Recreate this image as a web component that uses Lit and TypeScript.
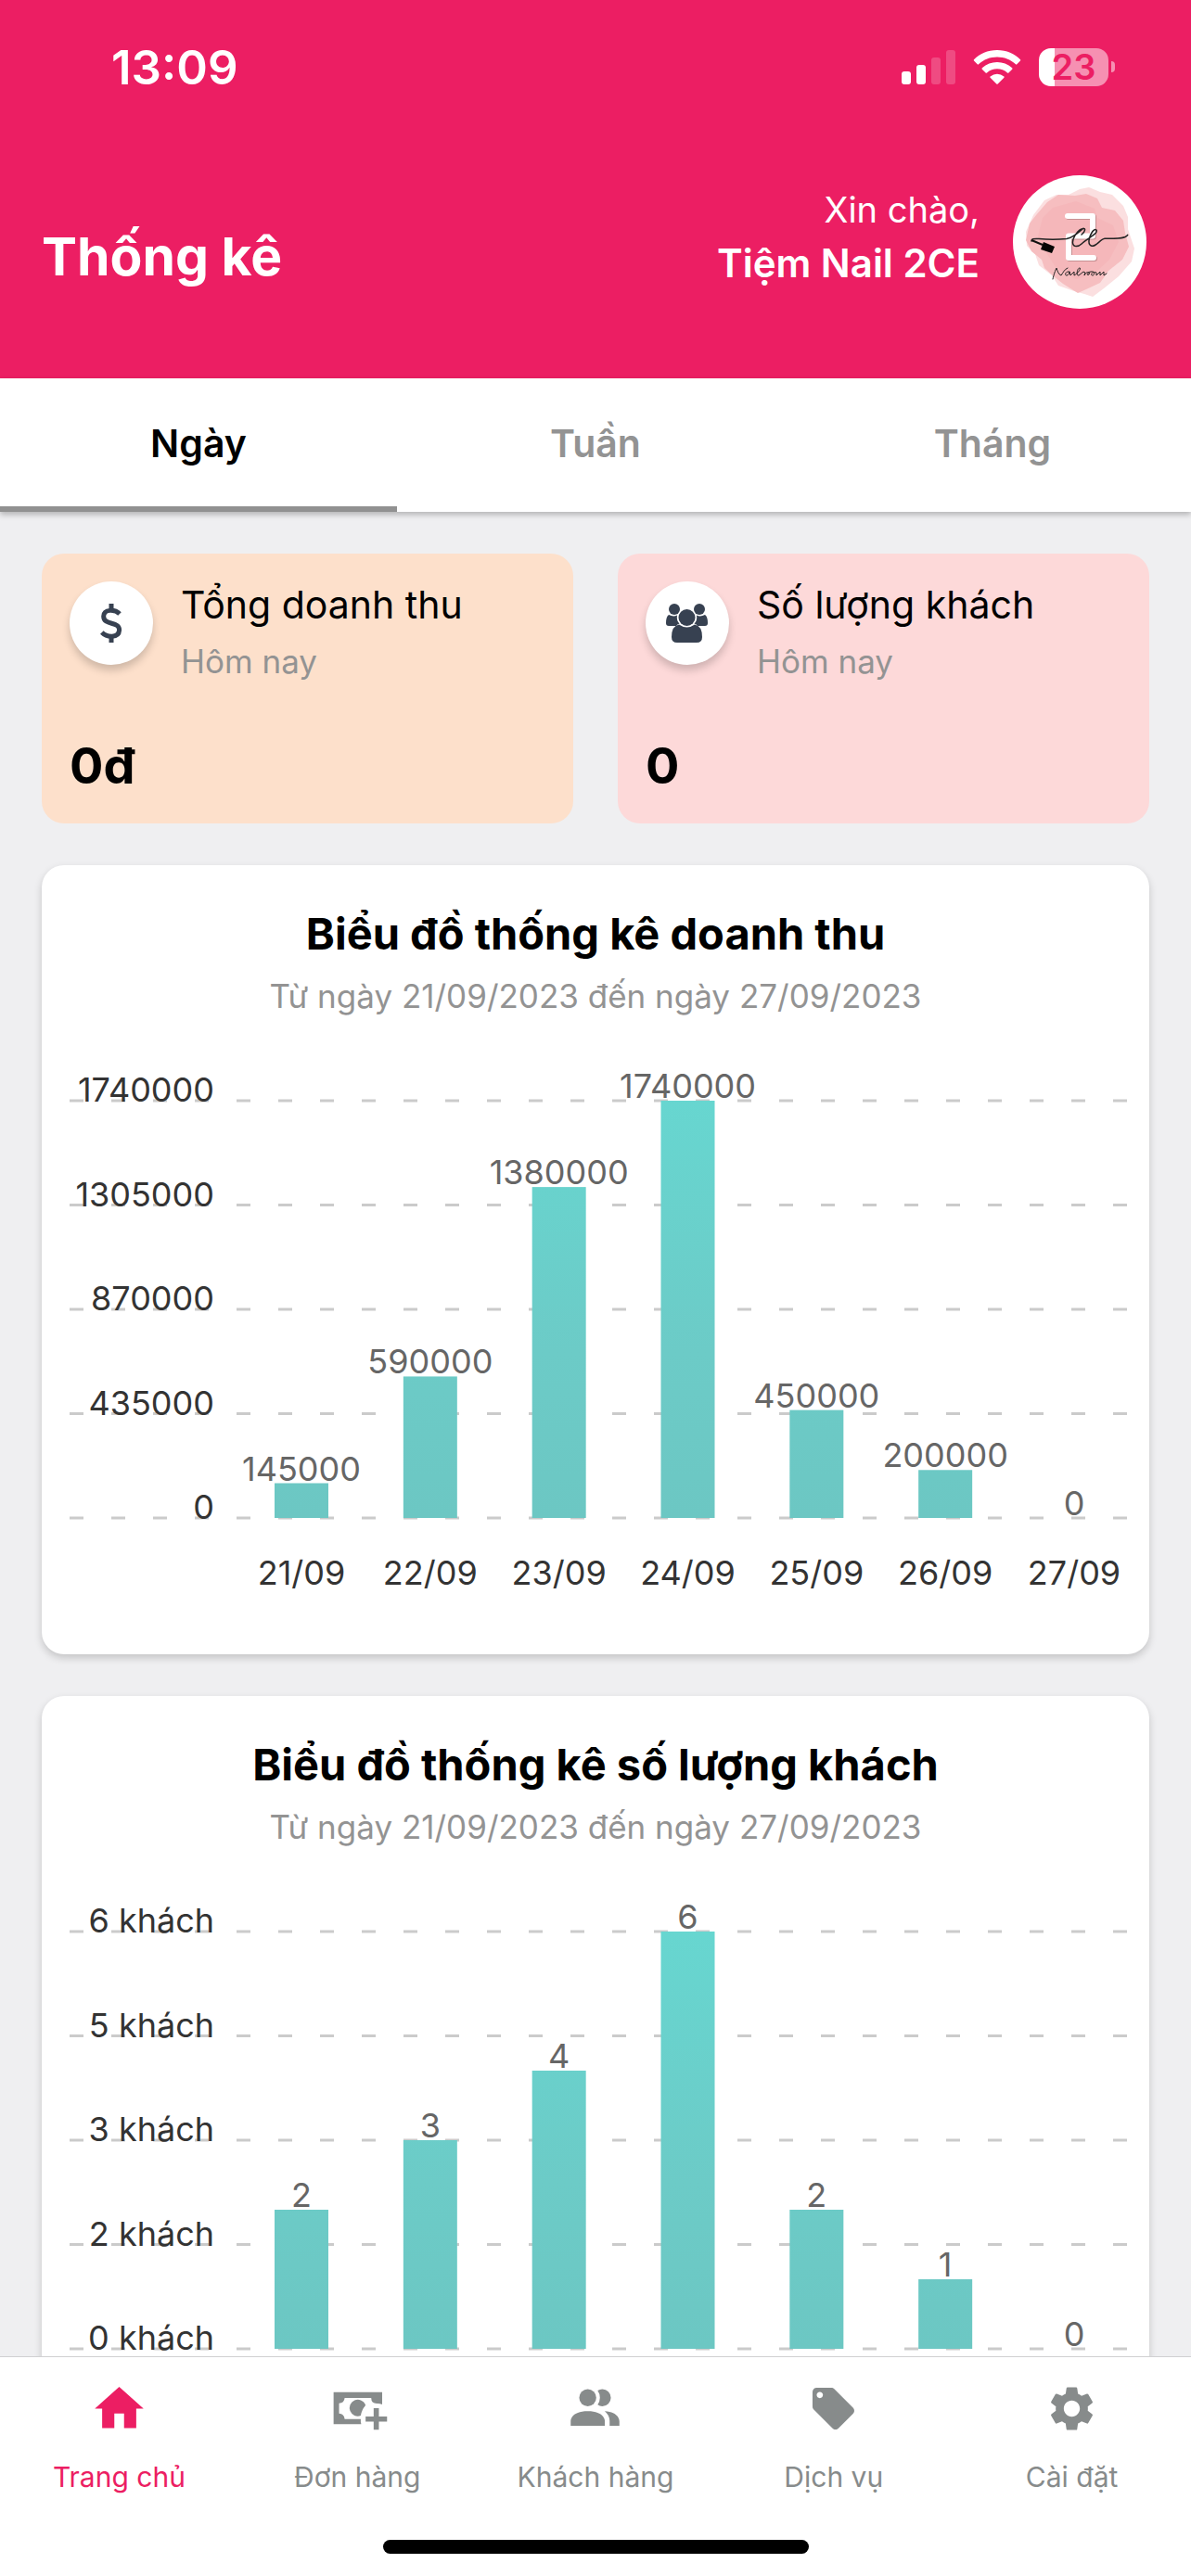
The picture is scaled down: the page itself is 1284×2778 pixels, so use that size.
import {LitElement, css, html, svg} from 'lit';
import {customElement, property, state} from 'lit/decorators.js';
import {classMap} from 'lit/directives/class-map.js';

interface ChartEntry {
  label: string;
  value: number;
}

const DAYS = ['21/09', '22/09', '23/09', '24/09', '25/09', '26/09', '27/09'];
const REVENUE = [145000, 590000, 1380000, 1740000, 450000, 200000, 0];
const CUSTOMERS = [2, 3, 4, 6, 2, 1, 0];

const toEntries = (values: number[]): ChartEntry[] =>
  values.map((value, i) => ({label: DAYS[i], value}));

@customElement('bar-chart')
export class BarChart extends LitElement {
  static styles = css`
    :host {
      display: block;
    }

    svg {
      display: block;
      width: 100%;
      font-family: Inter, 'Noto Sans', sans-serif;
      font-size: 36px;
    }

    .line {
      stroke: #cbcbcb;
      stroke-width: 3;
      stroke-dasharray: 15 30;
    }

    .tick {
      fill: #333;
      text-anchor: end;
    }

    .day {
      fill: #333;
      text-anchor: middle;
    }

    .value {
      fill: #666;
      text-anchor: middle;
    }
  `;

  @property({attribute: false})
  entries: ChartEntry[] = [];

  @property()
  unit: string = '';

  render() {
    const top = 89;
    const height = 450;
    const bottom = top + height;
    const max = Math.max(...this.entries.map((entry) => entry.value), 1);
    const ticks = [4, 3, 2, 1, 0];

    return html`
      <svg viewBox="0 0 1194 686" role="img" aria-label="Biểu đồ">
        <defs>
          <linearGradient id="bar" gradientUnits="userSpaceOnUse" x1="0" y1=${top} x2="0" y2=${bottom}>
            <stop offset="0" stop-color="#67d6d0"></stop>
            <stop offset="0.6" stop-color="#6ccbc7"></stop>
            <stop offset="1" stop-color="#6cc7c3"></stop>
          </linearGradient>
        </defs>
        ${ticks.map((tick) => {
          const y = bottom - (height * tick) / 4;
          return svg`
            <line class="line" x1="30" x2="1170" y1=${y} y2=${y}></line>
            <text class="tick" x="186" y=${y + 1}>${Math.round((max * tick) / 4)}${this.unit}</text>
          `;
        })}
        ${this.entries.map((entry, i) => {
          const x = 280 + (i * 833) / 6;
          const h = (height * entry.value) / max;
          return svg`
            <rect x=${x - 29} y=${bottom - h} width="58" height=${h} fill="url(#bar)"></rect>
            <text class="value" x=${x} y=${bottom - h - 3}>${entry.value}</text>
            <text class="day" x=${x} y=${bottom + 72}>${entry.label}</text>
          `;
        })}
      </svg>
    `;
  }
}

@customElement('stat-card')
export class StatCard extends LitElement {
  static styles = css`
    :host {
      display: flex;
      flex-direction: column;
      justify-content: space-between;
      box-sizing: border-box;
      min-height: 291px;
      padding: 30px;
      border-radius: 24px;
    }

    .top {
      display: flex;
      gap: 30px;
    }

    .icon {
      display: grid;
      place-items: center;
      flex: none;
      width: 90px;
      height: 90px;
      border-radius: 50%;
      background: #fff;
      box-shadow: 0 6px 9px rgb(0 0 0 / 18%);
    }

    .title,
    .period {
      margin: 0;
      font-weight: 400;
    }

    .title {
      font-size: 41px;
      line-height: 50px;
    }

    .period {
      padding-top: 12px;
      font-size: 35px;
      line-height: 48px;
      color: #939393;
    }

    .value {
      margin: 0;
      font-size: 54px;
      font-weight: 700;
      line-height: 64px;
    }
  `;

  @property()
  heading: string = '';

  @property()
  period: string = '';

  @property()
  value: string = '';

  render() {
    return html`
      <div class="top">
        <div class="icon"><slot></slot></div>
        <div>
          <h2 class="title">${this.heading}</h2>
          <p class="period">${this.period}</p>
        </div>
      </div>
      <p class="value">${this.value}</p>
    `;
  }
}

const signalIcon = svg`
  <svg width="58" height="37" viewBox="0 0 58 37" fill="#fff">
    <rect x="0" y="23" width="10" height="14" rx="3"></rect>
    <rect x="16" y="16" width="10" height="21" rx="3"></rect>
    <rect x="32" y="8" width="10" height="29" rx="3" opacity="0.2"></rect>
    <rect x="48" y="0" width="10" height="37" rx="3" opacity="0.2"></rect>
  </svg>
`;

const wifiIcon = svg`
  <svg width="52" height="37" viewBox="0 0 52 37" fill="#fff">
    <path d="M26 0C36 0 45 4 51 10.300Q51.600 11 51 11.600L47.300 15.300Q46.600 16 46 15.300C40.500 10.200 33.500 7.500 26 7.500S11.500 10.200 6 15.300Q5.400 16 4.700 15.300L1 11.600Q.4 11 1 10.300C7 4 16 0 26 0Z"></path>
    <path d="M26 13Q35 13 42.200 19.300Q42.900 20 42.200 20.700L38.400 24.500Q37.700 25.200 37 24.500Q32.200 20.300 26 20.300T15 24.500Q14.300 25.200 13.600 24.500L9.800 20.700Q9.100 20 9.800 19.300Q17 13 26 13Z"></path>
    <path d="M26 25.800Q30 25.800 33.400 28.400Q34 29 33.400 29.700L26.700 36.500Q26 37.200 25.300 36.500L18.600 29.700Q18 29 18.600 28.400Q22 25.800 26 25.800Z"></path>
  </svg>
`;

// Watercolour disc with the salon's monogram and nail brush.
const salonLogo = svg`
  <svg viewBox="0 0 144 144" role="img" aria-label="2CE Nailroom">
    <circle cx="72" cy="72" r="72" fill="#fff"></circle>
    <path d="M34 27L47 21L60 21L72 15L82 13L94 18L107 21L119 33L124 45L124 58L131 79L128 93L114 109L98 122L86 131L77 128L66 125L49 119L42 108L28 97L24 85L15 76L14 61L22 43Z" fill="#fbdfe0"></path>
    <path d="M37 29L49 21L67 22L79 20L91 25L96 35L110 38L119 49L121 62L125 77L118 91L103 103L94 116L79 123L70 127L54 117L44 109L34 100L31 91L20 82L14 70L18 52L25 43Z" fill="#f6bec0"></path>
    <path d="M43 35L68 28L88 36L91 46L108 54L114 72L104 91L88 106L68 112L46 99L35 82L27 66L32 46Z" fill="#f5b2b5" opacity="0.6"></path>
    <path d="M60 45H87V66.500H61V90H88" fill="none" stroke="#a87678" stroke-width="6" stroke-linecap="round" stroke-linejoin="round" opacity="0.600"></path>
    <path d="M59 44H86V65.500H60V89H87" fill="none" stroke="#fff" stroke-width="6" stroke-linecap="round" stroke-linejoin="round"></path>
    <path d="M20 71C20 68 23 68.500 28 68.500C38 69.500 48 69.500 58 68.500C66 67 71 61 75 57.800C79 56 78 61 74 64M76 57.500C70 58 64 68 64.500 73C65 78 71 77 74 74C78 70 86 66 89.500 62C92 58 88 57 85 62C82 67 80 75 85 76.300C90 77 94 69 99 68.300C107 67.500 120 70 123.700 64.300" fill="none" stroke="#222" stroke-width="1.500" stroke-linecap="round"></path>
    <path d="M20 70L32 75" stroke="#111" stroke-width="2"></path>
    <path d="M33 72L45 77L42 84L30 80Z" fill="#050505"></path>
    <path d="M44 113C45 108 47 103 48 101C49 104 50 108 53 109C55 106 57 102 60 101M62 105C58 104 56 109 59 109C61 109 62 106 62 105L63 109L67 105L67 109C71 107 75 101 73 101C70 101 69 110 72 109L77 105L79 106L78 109C80 104 85 105 83 108C80 110 81 105 85 105C90 104 89 109 87 109C84 109 86 104 91 106L91 109L95 105L95 109L99 105L99 109L102 107" transform="translate(-1 -1)" fill="none" stroke="#222" stroke-width="1" stroke-linecap="round" stroke-linejoin="round"></path>
  </svg>
`;

const dollarIcon = svg`
  <svg width="24" height="42" viewBox="0 0 24 42" fill="none" stroke="#374151" stroke-width="5">
    <path d="M12 0V7M12 35V42"></path>
    <path d="M21 11C16 6 4 5.500 3.700 13.500C3.500 24 21 18.500 20.600 28.500C20 37.500 7 36.500 1.800 31"></path>
  </svg>
`;

const peopleIcon = svg`
  <svg width="46" height="42" viewBox="0 0 46 42" fill="#374151">
    <circle cx="9" cy="6" r="6"></circle>
    <circle cx="36" cy="6" r="6"></circle>
    <path d="M3 12Q8 14.500 12 12.500Q11 18 14.500 21.500Q12 22 11 24H3Q0 24 0 21Q0 14 3 12Z"></path>
    <path d="M42 12Q37 14.500 33 12.500Q34 18 30.500 21.500Q33 22 34 24H42Q45 24 45 21Q45 14 42 12Z"></path>
    <circle cx="22.500" cy="15" r="9"></circle>
    <path d="M14 22.500Q22.500 28.500 31 22.500Q39 24 39 36Q39 42 33 42H12Q6 42 6 36Q6 24 14 22.500Z"></path>
  </svg>
`;

const NAV = [
  {
    label: 'Trang chủ',
    icon: svg`<path d="M10 20v-6h4v6h5v-8h3L12 3 2 12h3v8z"></path>`,
  },
  {
    label: 'Đơn hàng',
    icon: svg`
      <path d="M2.150 5.200H22.100V10.300Q21 9.800 19.900 9.900Q17.600 9.800 17.600 7.600H6.700Q6.500 9.700 4.400 9.800V14Q6.500 14.100 6.700 16.300H13.300Q13.200 17.400 13.500 18.400H2.150Z"></path>
      <path d="M15.200 10.300A3.400 3.400 0 1 0 13.300 14.900Q13.700 12.500 15.200 10.800Z"></path>
      <path d="M18.600 11.800H20.750V15.200H24.100V17.300H20.750V20.700H18.600V17.300H15.300V15.200H18.600Z"></path>
    `,
  },
  {
    label: 'Khách hàng',
    icon: svg`
      <path d="M16 17v2H2v-2s0-4 7-4 7 4 7 4"></path>
      <circle cx="9" cy="7.500" r="3.500"></circle>
      <path d="M15.940 13A5.320 5.320 0 0 1 18 17v2h4v-2s0-3.630-6.060-4M15 4a3.390 3.390 0 0 0-1.930.59 5 5 0 0 1 0 5.820A3.390 3.390 0 0 0 15 11a3.500 3.500 0 0 0 0-7z"></path>
    `,
  },
  {
    label: 'Dịch vụ',
    icon: svg`<path transform="translate(1.700 1.700) scale(0.857)" d="M21.410 11.580l-9-9C12.050 2.220 11.550 2 11 2H4c-1.100 0-2 .9-2 2v7c0 .55.22 1.050.59 1.420l9 9c.36.360.86.580 1.410.580s1.050-.22 1.410-.59l7-7c.37-.36.59-.86.59-1.410s-.23-1.060-.59-1.420zM5.500 7C4.670 7 4 6.330 4 5.500S4.670 4 5.500 4 7 4.670 7 5.500 6.330 7 5.500 7z"></path>`,
  },
  {
    label: 'Cài đặt',
    icon: svg`<path transform="translate(1 1) scale(0.917)" d="M19.140 12.940c.04-.3.060-.61.060-.94 0-.32-.02-.64-.07-.94l2.030-1.580c.18-.14.23-.41.120-.61l-1.920-3.320c-.12-.22-.37-.29-.59-.22l-2.390.96c-.5-.38-1.030-.7-1.620-.94l-.36-2.540c-.04-.24-.24-.41-.48-.41h-3.840c-.24 0-.43.170-.47.410l-.36 2.540c-.59.240-1.130.57-1.620.94l-2.390-.96c-.22-.08-.47 0-.59.220L2.740 8.870c-.12.210-.08.470.12.610l2.030 1.580c-.05.300-.09.630-.09.940s.02.640.07.940l-2.030 1.580c-.18.140-.23.410-.12.610l1.920 3.320c.12.220.37.290.59.220l2.390-.96c.5.380 1.030.7 1.620.94l.36 2.540c.05.240.24.410.48.410h3.840c.24 0 .44-.17.470-.41l.36-2.540c.59-.24 1.130-.56 1.620-.94l2.390.96c.22.080.47 0 .59-.22l1.920-3.320c.12-.22.070-.47-.12-.61l-2.010-1.580zM12 15.600c-1.980 0-3.600-1.620-3.600-3.600s1.620-3.600 3.600-3.600 3.600 1.620 3.600 3.600-1.620 3.600-3.600 3.600z"></path>`,
  },
];

const TABS = ['Ngày', 'Tuần', 'Tháng'];

@customElement('app-root')
export class AppRoot extends LitElement {
  static styles = css`
    :host {
      display: flex;
      flex-direction: column;
      height: 100vh;
      overflow: hidden;
      background: #efeff1;
      color: #000;
      font-family: Inter, 'Noto Sans', sans-serif;
    }

    * {
      box-sizing: border-box;
    }

    button {
      padding: 0;
      border: none;
      background: none;
      color: inherit;
      font: inherit;
    }

    .header {
      flex: none;
      height: 408px;
      background: #ec1e63;
      color: #fff;
    }

    .status {
      display: flex;
      align-items: center;
      justify-content: space-between;
      height: 144px;
      padding: 0 82px 0 120px;
    }

    .clock {
      font-size: 51px;
      font-weight: 600;
    }

    .indicators {
      display: flex;
      align-items: center;
      gap: 19px;
    }

    .battery {
      display: flex;
      align-items: center;
      gap: 3px;
    }

    .cell {
      width: 75px;
      height: 41px;
      border-radius: 13px;
      background: linear-gradient(to right, #fff 23%, #f690b2 23%);
      color: #ec1e63;
      font-size: 38px;
      font-weight: 600;
      line-height: 41px;
      text-align: center;
    }

    .nub {
      width: 4px;
      height: 12px;
      border-radius: 0 4px 4px 0;
      background: #f690b2;
    }

    .account {
      display: flex;
      align-items: center;
      gap: 36px;
      padding: 45px 48px 0 45px;
    }

    .page-title {
      flex: 1;
      margin: 0;
      padding-top: 30px;
      font-size: 57px;
      font-weight: 700;
    }

    .greeting {
      margin: 0;
      padding-bottom: 12px;
      font-size: 38px;
      line-height: 58px;
      text-align: right;
    }

    .greeting strong {
      display: block;
      font-size: 42px;
      font-weight: 600;
    }

    .avatar {
      width: 144px;
      height: 144px;
    }

    .tabs {
      display: grid;
      grid-template-columns: repeat(3, 1fr);
      flex: none;
      height: 144px;
      background: #fff;
      box-shadow: 0 3px 6px rgb(0 0 0 / 25%);
      z-index: 1;
    }

    .tab {
      border-bottom: 6px solid transparent;
      padding-top: 2px;
      color: #939393;
      font-size: 41px;
      font-weight: 600;
    }

    .tab.active {
      border-color: #919191;
      color: #000;
    }

    .content {
      display: flex;
      flex: 1;
      flex-direction: column;
      gap: 45px;
      min-height: 0;
      overflow: hidden;
      padding: 45px;
    }

    .stats {
      display: grid;
      grid-template-columns: 1fr 1fr;
      flex: none;
      gap: 48px;
    }

    .revenue {
      background: #fde0cb;
    }

    .customers {
      background: #fdd9d9;
    }

    .panel {
      flex: none;
      padding-top: 45px;
      border-radius: 24px;
      background: #fff;
      box-shadow: 0 4px 8px rgb(0 0 0 / 18%);
      text-align: center;
    }

    .panel h2 {
      margin: 0;
      font-size: 47px;
      font-weight: 700;
      line-height: 58px;
    }

    .panel p {
      margin: 0;
      padding-top: 14px;
      font-size: 35px;
      line-height: 48px;
      color: #939393;
    }

    .nav {
      display: grid;
      grid-template-columns: repeat(5, 1fr);
      flex: none;
      border-top: 1px solid #d0d0d2;
      background: #fff;
      z-index: 1;
    }

    .nav a {
      display: flex;
      flex-direction: column;
      align-items: center;
      gap: 18px;
      padding-top: 24px;
      color: #878b8b;
      font-size: 30px;
      line-height: 48px;
      text-decoration: none;
    }

    .nav a.active {
      color: #ec1e63;
    }

    .nav svg {
      width: 63px;
      height: 63px;
      overflow: visible;
      fill: currentColor;
    }

    .home-bar {
      display: flex;
      flex: none;
      justify-content: center;
      padding: 44px 0 24px;
      background: #fff;
    }

    .home-bar span {
      width: 459px;
      height: 15px;
      border-radius: 8px;
      background: #000;
    }
  `;

  @state()
  private tab = 0;

  render() {
    return html`
      <header class="header">
        <div class="status">
          <span class="clock">13:09</span>
          <div class="indicators">
            ${signalIcon}${wifiIcon}
            <div class="battery"><span class="cell">23</span><span class="nub"></span></div>
          </div>
        </div>
        <div class="account">
          <h1 class="page-title">Thống kê</h1>
          <p class="greeting">Xin chào,<strong>Tiệm Nail 2CE</strong></p>
          <div class="avatar">${salonLogo}</div>
        </div>
      </header>
      <div class="tabs" role="tablist">
        ${TABS.map((label, i) => html`
          <button
            class=${classMap({tab: true, active: i === this.tab})}
            role="tab"
            aria-selected=${i === this.tab}
            @click=${() => (this.tab = i)}
          >${label}</button>
        `)}
      </div>
      <main class="content">
        <div class="stats">
          <stat-card class="revenue" heading="Tổng doanh thu" period="Hôm nay" value="0đ">${dollarIcon}</stat-card>
          <stat-card class="customers" heading="Số lượng khách" period="Hôm nay" value="0">${peopleIcon}</stat-card>
        </div>
        <section class="panel">
          <h2>Biểu đồ thống kê doanh thu</h2>
          <p>Từ ngày 21/09/2023 đến ngày 27/09/2023</p>
          <bar-chart .entries=${toEntries(REVENUE)}></bar-chart>
        </section>
        <section class="panel">
          <h2>Biểu đồ thống kê số lượng khách</h2>
          <p>Từ ngày 21/09/2023 đến ngày 27/09/2023</p>
          <bar-chart .entries=${toEntries(CUSTOMERS)} unit=" khách"></bar-chart>
        </section>
      </main>
      <nav class="nav">
        ${NAV.map((item, i) => html`
          <a href="#" class=${classMap({active: i === 0})}>
            <svg viewBox="0 0 24 24" aria-hidden="true">${item.icon}</svg>
            ${item.label}
          </a>
        `)}
      </nav>
      <div class="home-bar"><span></span></div>
    `;
  }
}

declare global {
  interface HTMLElementTagNameMap {
    'app-root': AppRoot;
    'bar-chart': BarChart;
    'stat-card': StatCard;
  }
}
